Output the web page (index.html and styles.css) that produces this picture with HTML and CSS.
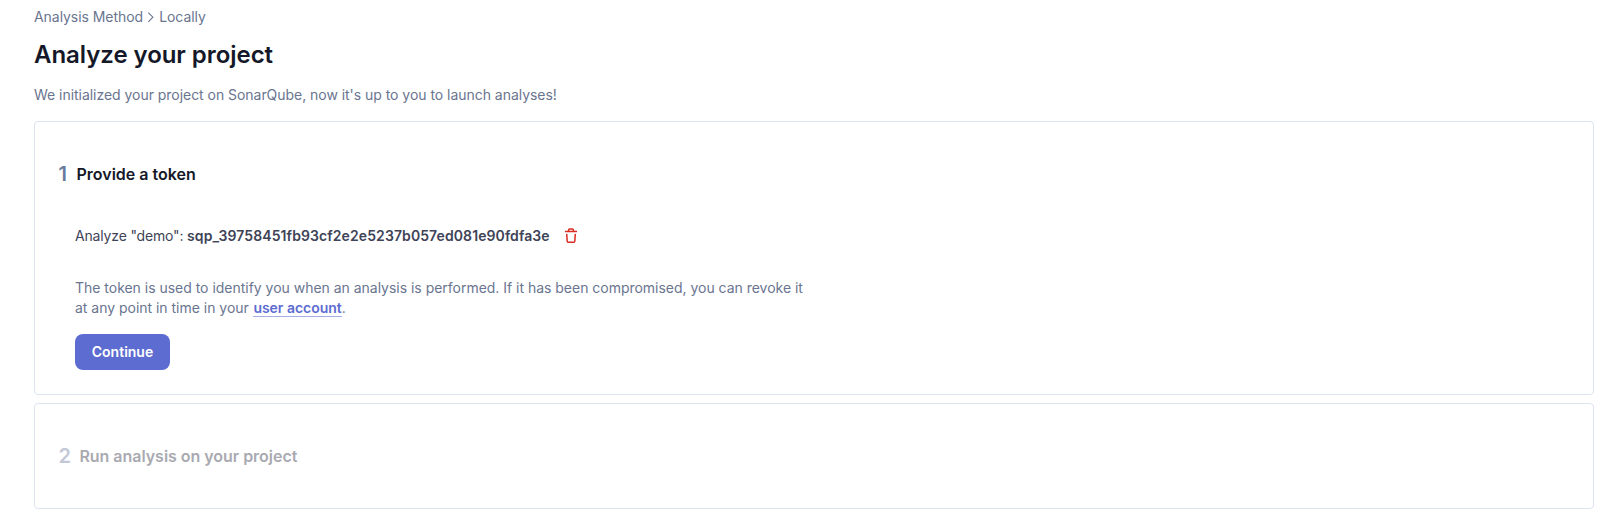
FILE: index.html
```html
<!DOCTYPE html>
<html lang="en"><head><meta charset="utf-8"><title>Analyze your project</title><link rel="stylesheet" href="styles.css"></head>
<body>
<nav class="breadcrumbs"><a>Analysis Method</a><svg class="chevron" width="16" height="16" viewBox="0 0 16 16"><path d="M5.3 3.6 9.9 8.2 5.3 12.8" fill="none" stroke="currentColor" stroke-width="1.1"/></svg><a>Locally</a></nav>
<h1 class="title">Analyze your project</h1>
<p class="intro">We initialized your project on SonarQube, now it's up to you to launch analyses!</p>
<main class="steps">
<section class="card">
<h2 class="step-title"><span class="number">1</span>Provide a token</h2>
<div class="content">
<div class="token"><span class="label">Analyze "demo": <strong>sqp_39758451fb93cf2e2e5237b057ed081e90fdfa3e</strong></span><svg class="trash" width="16" height="16" viewBox="0 0 16 16"><path d="M2 3.6h12M5.6 3.6V2q0-1 1-1h2.8q1 0 1 1v1.6M3.7 5.9l.5 7.4q.1 1 1 1h5.6q.9 0 1-1l.5-7.4" fill="none" stroke="currentColor" stroke-width="1.5"/></svg></div>
<p class="note">The token is used to identify you when an analysis is performed. If it has been compromised, you can revoke it at any point in time in your <a class="link">user account</a>.</p>
<button class="continue">Continue</button>
</div>
</section>
<section class="card card-disabled"><h2 class="step-title"><span class="number">2</span>Run analysis on your project</h2></section>
</main>
</body></html>
```
FILE: styles.css
```css
* { box-sizing: border-box; }
body { margin: 0; padding: 7px 23px 0 34px; background: #fff; color: #6a7590; font: 14px/20px Inter, sans-serif; }
.breadcrumbs { display: flex; align-items: center; height: 20px; letter-spacing: -0.05px; }
.title { margin: 12px 0 0; font-size: 24px; line-height: 32px; font-weight: 600; letter-spacing: -0.05px; color: #151828; }
.intro { margin: 14px 0 0; letter-spacing: -0.038px; }
.steps { display: flex; flex-direction: column; gap: 8px; margin-top: 16px; }
.card { height: 274px; border: 1px solid #dde3f0; border-radius: 4px; padding: 40px 24px 24px; }
.card-disabled { height: 106px; }
.step-title { display: flex; align-items: center; gap: 9px; margin: 0; height: 24px; font-size: 16px; font-weight: 600; color: #151828; }
.number { margin: 0 0.5px 0 -0.5px; color: #697b9d; font-size: 20px; }
.card-disabled .step-title { gap: 8px; letter-spacing: -0.03px; color: #a9aab1; }
.card-disabled .number { color: #c3c8d6; }
.content { padding: 40px 15px 0 16px; }
.token { display: flex; align-items: center; gap: 13px; height: 20px; color: #3e4357; }
.label { letter-spacing: -0.17px; }
.token strong { font-weight: 600; letter-spacing: 0.094px; }
.trash { color: #d92d20; }
.note { width: 740px; margin: 32px 0 0; letter-spacing: -0.02px; }
.link { margin-left: 0.7px; color: #5d6cd0; font-weight: 600; border-bottom: 1px solid #a5aee6; }
.continue { display: block; width: 95px; height: 36px; margin-top: 16px; border: 0; border-radius: 8px; background: #5d6cd0; color: #fff; font: 600 14px/20px Inter, sans-serif; }
```
